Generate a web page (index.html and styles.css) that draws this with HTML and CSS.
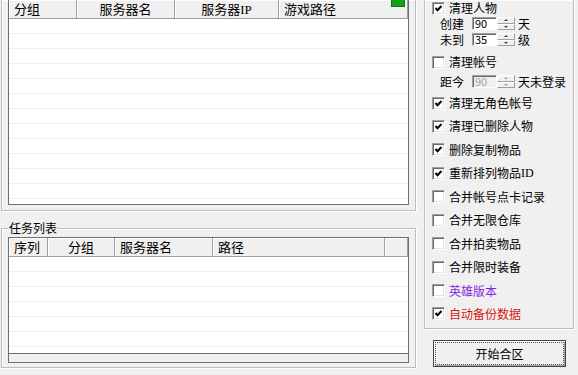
FILE: index.html
```html
<!DOCTYPE html>
<html>
<head>
<meta charset="utf-8">
<link rel="stylesheet" href="styles.css">
</head>
<body>
<div class="app">
  <div class="left">
    <div class="grp grp-top">
      <div class="list list-top">
        <div class="hdr cols-top">
          <div class="hc al">分组</div>
          <div class="hc ac">服务器名</div>
          <div class="hc ac">服务器<span class="lat">IP</span></div>
          <div class="hc al">游戏路径</div>
        </div>
        <div class="body body-top cols-top">
          <div class="bc"></div><div class="bc"></div><div class="bc"></div><div class="bc"></div>
        </div>
        <div class="badge"></div>
      </div>
    </div>
    <div class="grp grp-task">
      <div class="grp-title">任务列表</div>
      <div class="list list-task">
        <div class="hdr cols-task">
          <div class="hc al">序列</div>
          <div class="hc ac">分组</div>
          <div class="hc al">服务器名</div>
          <div class="hc al">路径</div>
          <div class="hc"></div>
        </div>
        <div class="body body-task cols-task">
          <div class="bc"></div><div class="bc"></div><div class="bc"></div><div class="bc"></div><div class="bc"></div>
        </div>
        <div class="hstrip"></div>
      </div>
    </div>
  </div>
  <div class="right">
    <div class="grp grp-opts">
      <div class="chk-row r1"><span class="cb on"><svg width="9" height="9" viewBox="0 0 9 9"><polyline points="1.5,4 3.5,6.2 7.5,2" fill="none" stroke="#000" stroke-width="2"/></svg></span>清理人物</div>
      <div class="sub r2"><span class="sub-lbl">创建</span><span class="edit">90</span><span class="spin"><i class="up"></i><i class="dn"></i></span><span class="unit">天</span></div>
      <div class="sub r3"><span class="sub-lbl">未到</span><span class="edit">35</span><span class="spin"><i class="up"></i><i class="dn"></i></span><span class="unit">级</span></div>
      <div class="chk-row r4"><span class="cb"></span>清理帐号</div>
      <div class="sub r5"><span class="sub-lbl">距今</span><span class="edit dis">90</span><span class="spin dis"><i class="up"></i><i class="dn"></i></span><span class="unit">天未登录</span></div>
      <div class="checks">
        <div class="chk-row"><span class="cb on"><svg width="9" height="9" viewBox="0 0 9 9"><polyline points="1.5,4 3.5,6.2 7.5,2" fill="none" stroke="#000" stroke-width="2"/></svg></span>清理无角色帐号</div>
        <div class="chk-row"><span class="cb on"><svg width="9" height="9" viewBox="0 0 9 9"><polyline points="1.5,4 3.5,6.2 7.5,2" fill="none" stroke="#000" stroke-width="2"/></svg></span>清理已删除人物</div>
        <div class="chk-row"><span class="cb on"><svg width="9" height="9" viewBox="0 0 9 9"><polyline points="1.5,4 3.5,6.2 7.5,2" fill="none" stroke="#000" stroke-width="2"/></svg></span>删除复制物品</div>
        <div class="chk-row"><span class="cb on"><svg width="9" height="9" viewBox="0 0 9 9"><polyline points="1.5,4 3.5,6.2 7.5,2" fill="none" stroke="#000" stroke-width="2"/></svg></span>重新排列物品<span class="lat">ID</span></div>
        <div class="chk-row"><span class="cb"></span>合并帐号点卡记录</div>
        <div class="chk-row"><span class="cb"></span>合并无限仓库</div>
        <div class="chk-row"><span class="cb"></span>合并拍卖物品</div>
        <div class="chk-row"><span class="cb"></span>合并限时装备</div>
        <div class="chk-row purple"><span class="cb"></span>英雄版本</div>
        <div class="chk-row red"><span class="cb on"><svg width="9" height="9" viewBox="0 0 9 9"><polyline points="1.5,4 3.5,6.2 7.5,2" fill="none" stroke="#000" stroke-width="2"/></svg></span>自动备份数据</div>
      </div>
    </div>
    <button class="btn">开始合区</button>
  </div>
</div>
</body>
</html>
```

FILE: styles.css
```css
* { box-sizing: border-box; }
html, body { margin: 0; padding: 0; }
body {
  background: #f0f0f0;
  font-family: "Noto Sans CJK SC", "Noto Sans", sans-serif;
  font-size: 12px;
  color: #000;
  width: 578px;
  height: 375px;
  overflow: hidden;
}
.lat { font-family: "Liberation Serif", serif; }
.app { display: flex; align-items: flex-start; }

.left { margin-left: 1px; width: 416px; display: flex; flex-direction: column; }
.grp {
  border: 1px solid #bdbdbd;
  box-shadow: 1px 1px 0 #fff, inset 1px 1px 0 #fff;
}
.grp-top {
  border-top: none;
  width: 415px;
  height: 211px;
  padding: 0 6px 6px 6px;
}
.list {
  background: #fff;
  border: 1px solid #6e6e6e;
  position: relative;
}
.list-top { border-top: none; height: 205px; }
.hdr {
  display: grid;
  height: 19px;
  background: #f0f0f0;
  border-bottom: 1px solid #a0a0a0;
}
.cols-top { grid-template-columns: 68px 98px 104px 129px; }
.cols-task { grid-template-columns: 39px 67px 98px 172px 23px; }
.hc {
  font-size: 13px;
  line-height: 18px;
  border-right: 1px solid #a0a0a0;
  box-shadow: inset 1px 1px 0 #fff;
  white-space: nowrap;
  overflow: hidden;
}
.al { padding-left: 5px; }
.ac { text-align: center; }
.body {
  background: repeating-linear-gradient(to bottom, transparent 0 14px, #f2ecee 14px 15px);
}
.bc { border-right: 1px solid #efefef; }
.body-top { height: 185px; }
.badge {
  position: absolute;
  top: 0;
  right: 3px;
  width: 14px;
  height: 7px;
  background: #14a014;
  border: 1px solid #0b7a0b;
  border-top: none;
}

.grp-task {
  margin-top: 17px;
  padding: 0 6px 4px 6px;
  width: 415px;
  display: flex;
  flex-direction: column;
}
.grp-title {
  margin-top: -8px;
  padding: 0 1px;
  line-height: 14px;
  background: #f0f0f0;
  align-self: flex-start;
}
.list-task { margin-top: 2px; height: 126px; }
.body-task { height: 97px; border-bottom: 1px solid #6e6e6e; }
.hstrip { height: 8px; background: #f0f0f0; }

.right { margin-left: 7px; width: 151px; display: flex; flex-direction: column; }
.grp-opts {
  border-top: none;
  width: 150px;
  height: 329px;
  padding: 0 0 0 7px;
  display: flex;
  flex-direction: column;
}
.chk-row {
  display: flex;
  align-items: center;
  height: 16px;
  line-height: 16px;
  white-space: nowrap;
}
.cb {
  width: 13px;
  height: 13px;
  flex: none;
  background: #fff;
  border: 1px solid;
  border-color: #a0a0a0 #fff #fff #a0a0a0;
  box-shadow: inset 1px 1px 0 #696969, inset -1px -1px 0 #e3e3e3;
  margin-right: 4px;
  display: flex;
  align-items: center;
  justify-content: center;
}
.cb svg { display: block; }
.r2 { margin-top: 1px; }
.r3 { margin-top: 3px; }
.r4 { margin-top: 8px; }
.r5 { margin-top: 5px; }
.sub {
  display: flex;
  align-items: center;
  height: 13px;
  padding-left: 8px;
  white-space: nowrap;
  line-height: 12px;
}
.sub-lbl { width: 32px; }
.edit {
  width: 25px;
  height: 13px;
  background: #fff;
  border: 1px solid;
  border-color: #a0a0a0 #fff #fff #a0a0a0;
  box-shadow: inset 1px 1px 0 #696969;
  font-size: 11px;
  line-height: 11px;
  padding-left: 2px;
}
.edit.dis { background: #f0f0f0; color: #a5a5a5; }
.spin {
  width: 18px;
  height: 13px;
  display: flex;
  flex-direction: column;
}
.spin i {
  flex: 1;
  display: flex;
  align-items: center;
  justify-content: center;
  background: #f0f0f0;
  border: 1px solid;
  border-color: #fff #a0a0a0 #a0a0a0 #fff;
}
.spin i::after {
  content: "";
  width: 0;
  height: 0;
  border-left: 2px solid transparent;
  border-right: 2px solid transparent;
}
.spin .up::after { border-bottom: 2px solid #444; }
.spin .dn::after { border-top: 2px solid #444; }
.spin.dis .up::after { border-bottom-color: #a0a0a0; }
.spin.dis .dn::after { border-top-color: #a0a0a0; }
.unit { margin-left: 3px; }
.checks {
  display: flex;
  flex-direction: column;
  gap: 7.44px;
  margin-top: 7px;
}
.purple { color: #8a1fe0; }
.red { color: #d91414; }

.btn {
  margin: 11px 0 0 9px;
  width: 133px;
  height: 27px;
  font-family: "Noto Sans CJK SC", sans-serif;
  font-size: 12px;
  color: #000;
  background: #f0f0f0;
  border: 1px solid #444;
  box-shadow: inset 1px 1px 0 #fff, inset -1px -1px 0 #a0a0a0;
  outline: 1px dotted #555;
  outline-offset: -3px;
  padding: 0;
}
```
